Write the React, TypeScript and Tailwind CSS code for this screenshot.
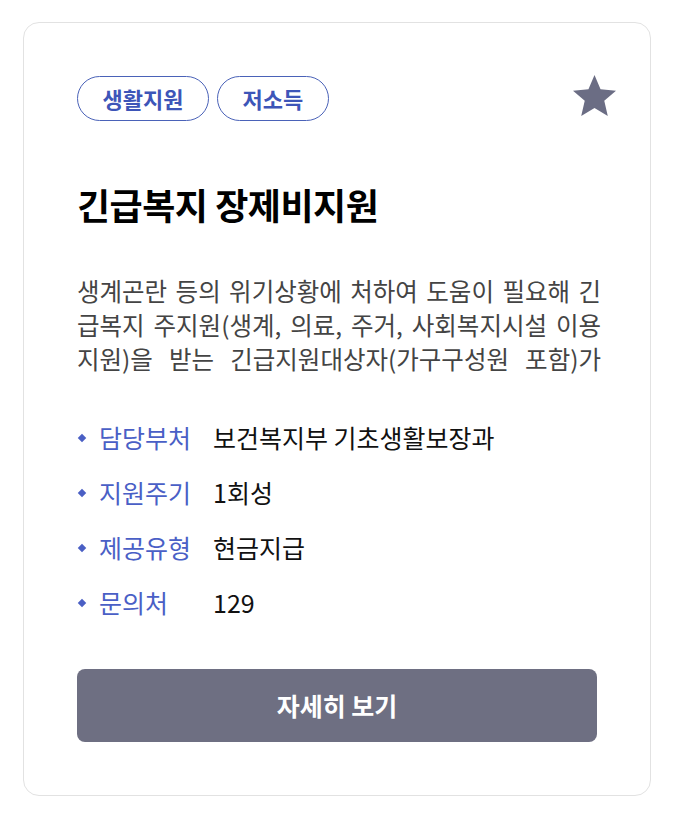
import { useState } from 'react'

const tags = ['생활지원', '저소득']

const details = [
  { label: '담당부처', value: '보건복지부 기초생활보장과' },
  { label: '지원주기', value: '1회성' },
  { label: '제공유형', value: '현금지급' },
  { label: '문의처', value: '129' },
]

// each visible line of the summary is justified edge to edge, like the source card
const summaryLines = [
  '생계곤란 등의 위기상황에 처하여 도움이 필요해 긴',
  '급복지 주지원(생계, 의료, 주거, 사회복지시설 이용',
  '지원)을 받는 긴급지원대상자(가구구성원 포함)가',
]

export default function App() {
  const [starred, setStarred] = useState(true)

  return (
    <div className="min-h-screen bg-white pt-[22px] pl-[23px] pr-[22px] pb-[19px] font-['Noto_Sans_CJK_KR','Noto_Sans',sans-serif]">
      <div className="rounded-[16px] border border-[#e2e2e2] bg-white px-[53px] pt-[53px] pb-[53px]">
        {/* tags + bookmark */}
        <div className="flex items-start justify-between">
          <div className="flex gap-[8px]">
            {tags.map((t) => (
              <span
                key={t}
                className="flex h-[45px] items-center rounded-full border border-[#4a62b8] px-[24.5px] text-[22px] font-semibold text-[#3d55b8]"
              >
                {t}
              </span>
            ))}
          </div>
          <button
            type="button"
            aria-label="즐겨찾기"
            onClick={() => setStarred((s) => !s)}
            className="-mr-[19px] -mt-px"
          >
            <svg width="43" height="41" viewBox="2 2 20 19" fill={starred ? '#6b6d84' : 'none'} stroke="#6b6d84" strokeWidth={starred ? 0 : 1.5}>
              <path d="M12 17.27L18.18 21l-1.64-7.03L22 9.24l-7.19-.61L12 2 9.19 8.63 2 9.24l5.46 4.73L5.82 21z" />
            </svg>
          </button>
        </div>

        <h2 className="mt-[62px] text-[36px] font-bold leading-[42px] tracking-[-0.5px] text-black">
          긴급복지 장제비지원
        </h2>

        <div className="mt-[49px] -mr-[4px] text-[24.5px] leading-[34px] text-[#444444]">
          {summaryLines.map((line) => (
            <p key={line} className="text-justify [text-align-last:justify]">
              {line}
            </p>
          ))}
        </div>

        <ul className="mt-[34px]">
          {details.map((d) => (
            <li key={d.label} className="flex h-[55px] items-center text-[25px]">
              <span className="ml-[2px] mr-[14px] h-[6px] w-[6px] rotate-45 bg-[#4a5fc4]" />
              <span className="w-[114px] text-[#4a5fc6]">{d.label}</span>
              <span className="text-[#111111]">{d.value}</span>
            </li>
          ))}
        </ul>

        <button
          type="button"
          className="mt-[39px] flex h-[73px] w-full items-center justify-center rounded-[8px] bg-[#6e6f82] text-[25px] font-bold text-white"
        >
          자세히 보기
        </button>
      </div>
    </div>
  )
}
